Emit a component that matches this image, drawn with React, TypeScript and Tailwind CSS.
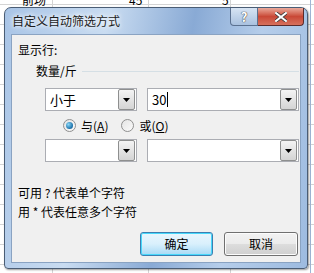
import React from "react";

const font = { fontFamily: '"Noto Sans CJK SC", "Noto Sans", sans-serif' };

const DropButton = () => (
  <div className="flex h-[21px] w-[17px] shrink-0 items-center justify-center rounded-[2px] border border-[#8e8f8f] bg-gradient-to-b from-[#f4f4f4] to-[#d4d4d4]">
    <svg width="7" height="4" viewBox="0 0 7 4">
      <path d="M0 0h7L3.5 4z" fill="#000" />
    </svg>
  </div>
);

const Combo = ({ width, value, caret }: { width: string; value?: string; caret?: boolean }) => (
  <div className={`flex h-[23px] ${width} items-center border border-[#abadb3] bg-white pr-[1px]`}>
    <div className="flex flex-1 items-center pl-[4px] text-[13px] leading-none text-black">
      {value}
      {caret && <span className="ml-[1px] inline-block h-[15px] w-[1px] bg-black" />}
    </div>
    <DropButton />
  </div>
);

const Radio = ({ checked, label, mnemonic }: { checked?: boolean; label: string; mnemonic: string }) => (
  <div className="flex items-center gap-[5px]">
    <div className="flex h-[13px] w-[13px] items-center justify-center rounded-full border border-[#8f8f8f] bg-gradient-to-br from-[#e4e4e4] to-[#fafafa]">
      {checked && (
        <div className="h-[7px] w-[7px] rounded-full bg-[radial-gradient(circle_at_35%_35%,#8ad7f7,#1a6fa8_70%,#0c4a7a)]" />
      )}
    </div>
    <span className="text-[12px] leading-none text-black">
      {label}(<span className="underline">{mnemonic}</span>)
    </span>
  </div>
);

export default function App() {
  return (
    <div className="relative h-[273px] w-[314px] overflow-hidden bg-white" style={font}>
      {/* spreadsheet behind the dialog */}
      <div className="absolute inset-0 bg-[linear-gradient(#d4d4d4_1px,transparent_1px)] bg-[length:100%_20px] bg-[position:0_4px]" />
      <div className="absolute left-[52px] top-0 h-full w-px bg-[#d4d4d4]" />
      <div className="absolute left-[148px] top-0 h-full w-px bg-[#d4d4d4]" />
      <div className="absolute left-[230px] top-0 h-full w-px bg-[#d4d4d4]" />
      <div className="absolute left-[310px] top-0 h-full w-px bg-[#9fb6d6]" />
      <div className="absolute left-[22px] top-[-9px] text-[12px] text-black">前场</div>
      <div className="absolute left-[129px] top-[-9px] text-[12px] text-black">45</div>
      <div className="absolute left-[222px] top-[-9px] text-[12px] text-black">5</div>

      {/* dialog */}
      <div className="absolute left-[4px] top-[7px] flex h-[262px] w-[304px] flex-col rounded-t-[7px] rounded-b-[4px] border border-[#4a5d75] bg-[linear-gradient(100deg,#a8c4e6_0%,#c9dcf1_30%,#89aad5_55%,#b5cdea_75%,#9dbbe0_100%)] shadow-[1px_1px_2px_rgba(0,0,0,0.4)]">
        <div className="flex h-[25px] items-start justify-between">
          <span className="mt-[5px] ml-[7px] text-[12px] leading-[16px] text-[#1b1b1b] [text-shadow:0_0_6px_#fff,0_0_4px_#fff]">
            自定义自动筛选方式
          </span>
          <div className="mr-[3px] flex">
            <div className="flex h-[18px] w-[28px] items-center justify-center rounded-bl-[4px] border border-t-0 border-[#5b7190] bg-gradient-to-b from-[#d7e4f3] to-[#a9c1df]">
              <span className="text-[13px] font-bold leading-none text-white [text-shadow:0_0_1px_#333,0_0_1px_#333]">?</span>
            </div>
            <div className="flex h-[18px] w-[46px] items-center justify-center rounded-br-[4px] border border-l-0 border-t-0 border-[#5b2b2b] bg-gradient-to-b from-[#e9a99b] via-[#c94836] to-[#d6705c]">
              <svg width="12" height="10" viewBox="0 0 12 10">
                <path d="M1 1l10 8M11 1L1 9" stroke="#3a3a3a" strokeWidth="3.6" strokeLinecap="square" />
                <path d="M1 1l10 8M11 1L1 9" stroke="#fff" strokeWidth="2" strokeLinecap="square" />
              </svg>
            </div>
          </div>
        </div>

        <div className="mx-[6px] mt-[1px] flex h-[229px] flex-col border border-[#8aa3c2] bg-[#f0f0f0] text-black">
          <div className="ml-[6px] mt-[7px] text-[12px] leading-[16px]">显示行:</div>
          <div className="mt-[5px] flex items-center">
            <span className="ml-[24px] text-[12px] leading-[16px]">数量/斤</span>
            <div className="ml-[5px] mr-[1px] h-px flex-1 bg-[#d5dfe5]" />
          </div>
          <div className="ml-[33px] mt-[9px] flex gap-[10px]">
            <Combo width="w-[92px]" value="小于" />
            <Combo width="w-[152px]" value="30" caret />
          </div>
          <div className="ml-[51px] mt-[8px] flex gap-[13px]">
            <Radio checked label="与" mnemonic="A" />
            <Radio label="或" mnemonic="O" />
          </div>
          <div className="ml-[33px] mt-[7px] flex gap-[10px]">
            <Combo width="w-[92px]" />
            <Combo width="w-[152px]" />
          </div>
          <div className="ml-[6px] mt-[21px] text-[12px] leading-[19px]">
            <div>可用 ? 代表单个字符</div>
            <div>用 * 代表任意多个字符</div>
          </div>
          <div className="ml-[128px] mt-[11px] flex gap-[11px]">
            <div className="flex h-[24px] w-[73px] items-center justify-center rounded-[3px] border border-[#3c7fb1] bg-gradient-to-b from-[#eaf6fd] via-[#d9f0fc] to-[#a7d9f5] shadow-[inset_0_0_0_1px_#48d8fb]">
              <span className="text-[12px] leading-none">确定</span>
            </div>
            <div className="flex h-[24px] w-[74px] items-center justify-center rounded-[3px] border border-[#707070] bg-[linear-gradient(#f2f2f2,#ebebeb_50%,#dddddd_50%,#cfcfcf)] shadow-[inset_0_0_0_1px_#fcfcfc]">
              <span className="text-[12px] leading-none">取消</span>
            </div>
          </div>
        </div>
      </div>
    </div>
  );
}
